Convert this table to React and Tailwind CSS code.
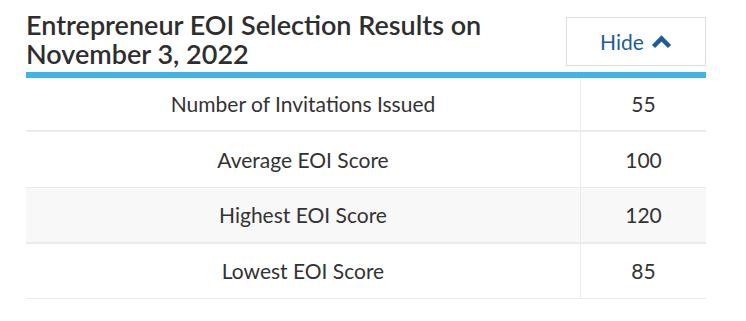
import React from 'react';

const rows = [
  { label: 'Number of Invitations Issued', value: '55', bg: 'bg-white', border: 'border-b-2', h: 'h-[52px]' },
  { label: 'Average EOI Score', value: '100', bg: 'bg-white', border: 'border-b', h: 'h-[55px]' },
  { label: 'Highest EOI Score', value: '120', bg: 'bg-[#f8f8f8]', border: 'border-b-2', h: 'h-[54px]' },
  { label: 'Lowest EOI Score', value: '85', bg: 'bg-white', border: 'border-b', h: 'h-[54px]' },
];

export default function App() {
  return (
    <div className="w-[746px] h-[321px] bg-white pl-[26px] pt-[10px] font-['Lato','Noto_Sans',sans-serif] text-[#333]">
      <div className="w-[680px]">
        <div className="flex items-end justify-between">
          <h2 className="text-[27px] leading-[29px] font-semibold w-[520px] pb-[4px] text-[#2e2e2e]">
            Entrepreneur EOI Selection Results on November 3, 2022
          </h2>
          <button className="w-[140px] h-[49px] mb-[6px] border border-[#dedede] flex items-center justify-center gap-[7px] text-[21px] text-[#1b5d98]">
            Hide
            <svg width="21" height="14" viewBox="0 0 21 14">
              <path d="M2.5 11.5 L10.5 3.5 L18.5 11.5" fill="none" stroke="#1b5d98" strokeWidth="4.5" />
            </svg>
          </button>
        </div>
        <div className="h-[6px] bg-[#41b4e5]" />
        {rows.map((r) => (
          <div key={r.label} className={`flex ${r.bg} ${r.border} border-[#ebebeb]`}>
            <div className={`w-[555px] ${r.h} flex items-center justify-center text-[21px] border-r border-[#ebebeb]`}>
              {r.label}
            </div>
            <div className="flex-1 flex items-center justify-center text-[21px]">{r.value}</div>
          </div>
        ))}
      </div>
    </div>
  );
}
